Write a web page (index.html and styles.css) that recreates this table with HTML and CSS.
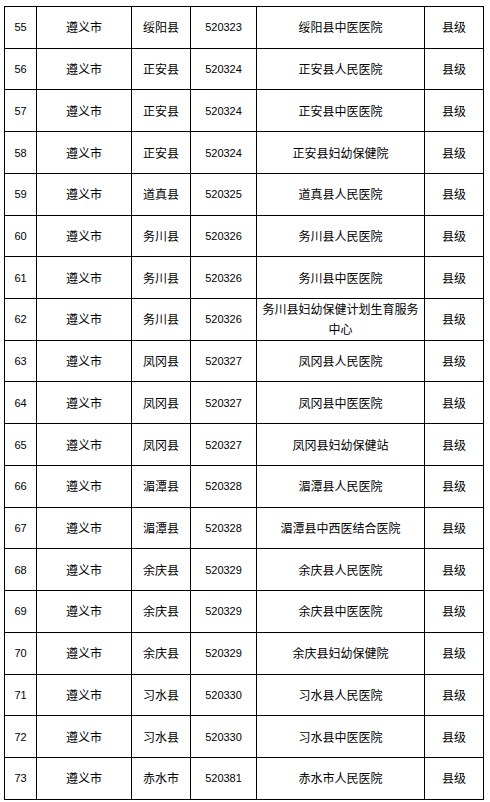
FILE: index.html
```html
<!DOCTYPE html>
<html lang="zh">
<head>
<meta charset="utf-8">
<link rel="stylesheet" href="styles.css">
</head>
<body>
<table class="list">
<colgroup>
<col class="c1"><col class="c2"><col class="c3"><col class="c4"><col class="c5"><col class="c6">
</colgroup>
<tbody>
<tr><td class="num">55</td><td>遵义市</td><td>绥阳县</td><td class="num">520323</td><td>绥阳县中医医院</td><td>县级</td></tr>
<tr><td class="num">56</td><td>遵义市</td><td>正安县</td><td class="num">520324</td><td>正安县人民医院</td><td>县级</td></tr>
<tr><td class="num">57</td><td>遵义市</td><td>正安县</td><td class="num">520324</td><td>正安县中医医院</td><td>县级</td></tr>
<tr><td class="num">58</td><td>遵义市</td><td>正安县</td><td class="num">520324</td><td>正安县妇幼保健院</td><td>县级</td></tr>
<tr><td class="num">59</td><td>遵义市</td><td>道真县</td><td class="num">520325</td><td>道真县人民医院</td><td>县级</td></tr>
<tr><td class="num">60</td><td>遵义市</td><td>务川县</td><td class="num">520326</td><td>务川县人民医院</td><td>县级</td></tr>
<tr><td class="num">61</td><td>遵义市</td><td>务川县</td><td class="num">520326</td><td>务川县中医医院</td><td>县级</td></tr>
<tr><td class="num">62</td><td>遵义市</td><td>务川县</td><td class="num">520326</td><td>务川县妇幼保健计划生育服务中心</td><td>县级</td></tr>
<tr><td class="num">63</td><td>遵义市</td><td>凤冈县</td><td class="num">520327</td><td>凤冈县人民医院</td><td>县级</td></tr>
<tr><td class="num">64</td><td>遵义市</td><td>凤冈县</td><td class="num">520327</td><td>凤冈县中医医院</td><td>县级</td></tr>
<tr><td class="num">65</td><td>遵义市</td><td>凤冈县</td><td class="num">520327</td><td>凤冈县妇幼保健站</td><td>县级</td></tr>
<tr><td class="num">66</td><td>遵义市</td><td>湄潭县</td><td class="num">520328</td><td>湄潭县人民医院</td><td>县级</td></tr>
<tr><td class="num">67</td><td>遵义市</td><td>湄潭县</td><td class="num">520328</td><td>湄潭县中西医结合医院</td><td>县级</td></tr>
<tr><td class="num">68</td><td>遵义市</td><td>余庆县</td><td class="num">520329</td><td>余庆县人民医院</td><td>县级</td></tr>
<tr><td class="num">69</td><td>遵义市</td><td>余庆县</td><td class="num">520329</td><td>余庆县中医医院</td><td>县级</td></tr>
<tr><td class="num">70</td><td>遵义市</td><td>余庆县</td><td class="num">520329</td><td>余庆县妇幼保健院</td><td>县级</td></tr>
<tr><td class="num">71</td><td>遵义市</td><td>习水县</td><td class="num">520330</td><td>习水县人民医院</td><td>县级</td></tr>
<tr><td class="num">72</td><td>遵义市</td><td>习水县</td><td class="num">520330</td><td>习水县中医医院</td><td>县级</td></tr>
<tr><td class="num">73</td><td>遵义市</td><td>赤水市</td><td class="num">520381</td><td>赤水市人民医院</td><td>县级</td></tr>
</tbody>
</table>
</body>
</html>
```
FILE: styles.css
```css
html, body {
  margin: 0;
  padding: 0;
  background: #ffffff;
}
body {
  padding: 6px 0 0 4px;
  font-family: "Noto Sans CJK SC", "Liberation Sans", sans-serif;
  font-size: 12px;
  color: #000000;
}
.list {
  border-collapse: collapse;
  table-layout: fixed;
  width: 479px;
}
.c1 { width: 32px; }
.c2 { width: 95px; }
.c3 { width: 59px; }
.c4 { width: 66px; }
.c5 { width: 168px; }
.c6 { width: 59px; }
.list tr {
  height: 41.72px;
}
.list td {
  border: 1px solid #000000;
  text-align: center;
  vertical-align: middle;
  padding: 0 4px;
  line-height: 20px;
}
.list td.num {
  font-family: "Liberation Sans", Arial, sans-serif;
  font-size: 11px;
}
```
